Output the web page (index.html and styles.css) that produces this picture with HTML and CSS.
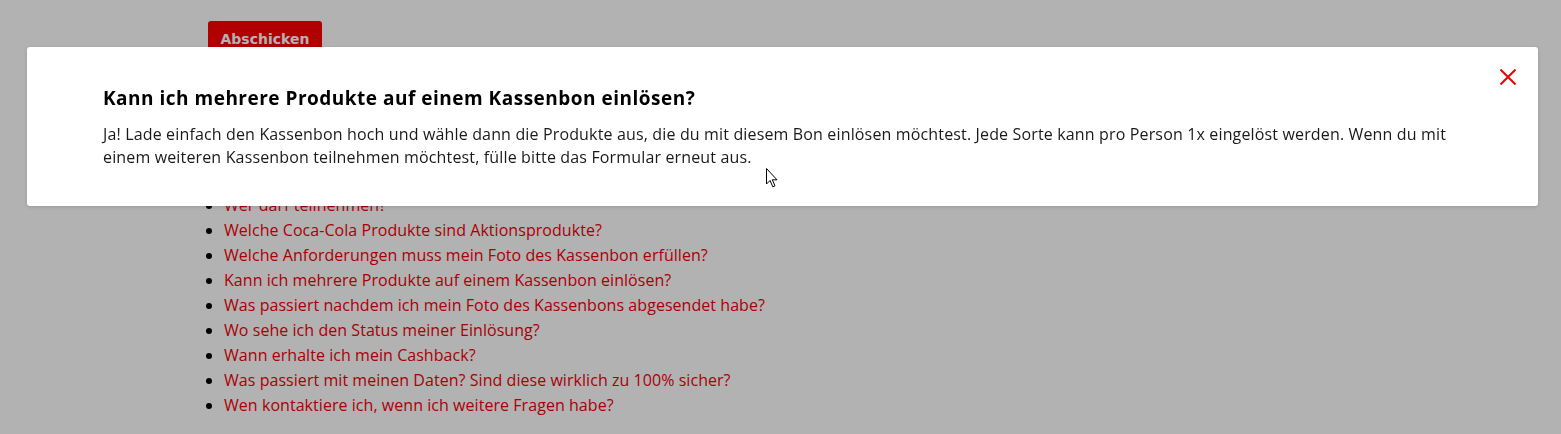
FILE: index.html
```html
<!DOCTYPE html>
<html lang="de">
<head>
<meta charset="utf-8">
<title>FAQ</title>
<link rel="stylesheet" href="styles.css">
</head>
<body>
<div class="page">
  <button class="submit" type="button">Abschicken</button>
  <ul class="faq">
    <li><a href="#">Wer darf teilnehmen?</a></li>
    <li><a href="#">Welche Coca-Cola Produkte sind Aktionsprodukte?</a></li>
    <li><a href="#">Welche Anforderungen muss mein Foto des Kassenbon erfüllen?</a></li>
    <li><a href="#">Kann ich mehrere Produkte auf einem Kassenbon einlösen?</a></li>
    <li><a href="#">Was passiert nachdem ich mein Foto des Kassenbons abgesendet habe?</a></li>
    <li><a href="#">Wo sehe ich den Status meiner Einlösung?</a></li>
    <li><a href="#">Wann erhalte ich mein Cashback?</a></li>
    <li><a href="#">Was passiert mit meinen Daten? Sind diese wirklich zu 100% sicher?</a></li>
    <li><a href="#">Wen kontaktiere ich, wenn ich weitere Fragen habe?</a></li>
  </ul>
</div>
<div class="overlay">
  <div class="modal">
    <button class="close" type="button" aria-label="Schließen">
      <svg width="16" height="16" viewBox="0 0 16 16"><path d="M0.5 0.5 L15.5 15.5 M15.5 0.5 L0.5 15.5" stroke="#ee0000" stroke-width="2" fill="none"/></svg>
    </button>
    <h3 class="modal-title">Kann ich mehrere Produkte auf einem Kassenbon einlösen?</h3>
    <p class="modal-text">Ja! Lade einfach den Kassenbon hoch und wähle dann die Produkte aus, die du mit diesem Bon einlösen möchtest. Jede Sorte kann pro Person 1x eingelöst werden. Wenn du mit einem weiteren Kassenbon teilnehmen möchtest, fülle bitte das Formular erneut aus.</p>
    <svg class="cursor" width="14" height="20" viewBox="0 0 14 20"><path d="M0.5 0.5 L0.5 16 L4 12.5 L6.8 18.8 L9 17.8 L6.3 11.8 L11 11.8 Z" fill="#fff" stroke="#000" stroke-width="1"/></svg>
  </div>
</div>
</body>
</html>
```
FILE: styles.css
```css
html, body {
  margin: 0;
  padding: 0;
  background: #ffffff;
}
body {
  font-family: "Open Sans", "Liberation Sans", sans-serif;
  color: #1a1a1a;
  height: 434px;
  overflow: hidden;
}
.page {
  padding: 21px 0 0 208px;
}
.submit {
  display: block;
  font-family: Verdana, "DejaVu Sans", sans-serif;
  font-weight: bold;
  font-size: 14px;
  color: #ffffff;
  background: #fe0000;
  border: 0;
  border-radius: 3px;
  padding: 0 12px;
  height: 36px;
  width: 114px;
}
.faq {
  margin: 136px 0 0 0;
  padding: 0 0 0 16px;
  list-style: disc;
  font-size: 16px;
  line-height: 25px;
  letter-spacing: 0.05px;
}
.faq li::marker {
  color: #000;
}
.faq a {
  color: #f40009;
  text-decoration: none;
}
.overlay {
  position: fixed;
  inset: 0;
  background: rgba(0, 0, 0, 0.3);
  padding: 47px 23px 0 27px;
}
.modal {
  position: relative;
  background: #ffffff;
  border-radius: 3px;
  box-shadow: 0 1px 4px rgba(0, 0, 0, 0.15);
  padding: 39px 76px 37px 76px;
}
.modal-title {
  margin: 0 0 13px 0;
  font-size: 19px;
  line-height: 24px;
  font-weight: bold;
  letter-spacing: 0.5px;
  color: #000;
}
.modal-text {
  margin: 0;
  font-size: 16px;
  line-height: 23px;
  letter-spacing: 0.15px;
  color: #1a1a1a;
}
.close {
  position: absolute;
  top: 22px;
  right: 22px;
  width: 16px;
  height: 16px;
  padding: 0;
  border: 0;
  background: transparent;
}
.close svg {
  display: block;
}
.cursor {
  position: absolute;
  left: 739px;
  top: 121px;
}
```
